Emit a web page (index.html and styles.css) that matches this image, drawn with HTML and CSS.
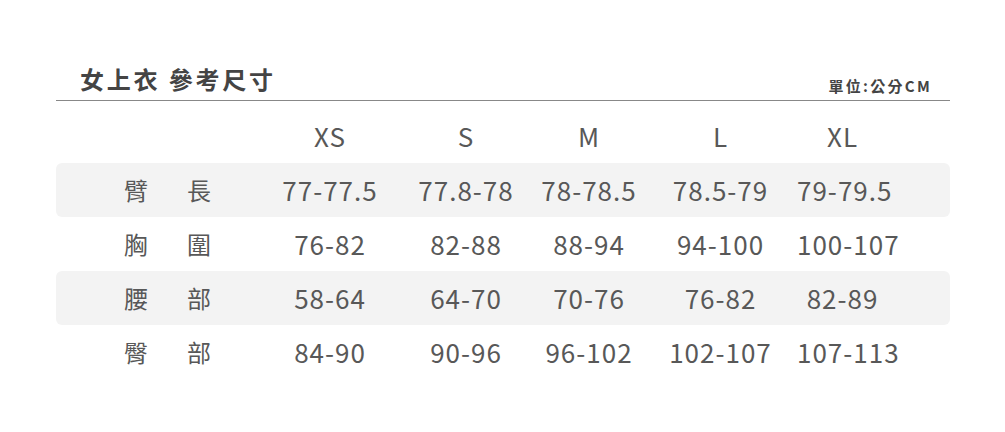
FILE: index.html
```html
<!DOCTYPE html>
<html lang="zh-Hant">
<head>
<meta charset="utf-8">
<link rel="stylesheet" href="styles.css">
</head>
<body>
<div class="page">
  <div class="head">
    <h1 class="title">女上衣 參考尺寸</h1>
    <div class="unit">單位:公分CM</div>
  </div>
  <div class="table">
    <div class="row">
      <div class="label"></div>
      <div class="cell">XS</div><div class="cell">S</div><div class="cell">M</div><div class="cell">L</div><div class="cell">XL</div>
    </div>
    <div class="row band">
      <div class="label"><span>臂</span><span>長</span></div>
      <div class="cell">77-77.5</div><div class="cell">77.8-78</div><div class="cell">78-78.5</div><div class="cell">78.5-79</div><div class="cell">79-79.5</div>
    </div>
    <div class="row">
      <div class="label"><span>胸</span><span>圍</span></div>
      <div class="cell">76-82</div><div class="cell">82-88</div><div class="cell">88-94</div><div class="cell">94-100</div><div class="cell">100-107</div>
    </div>
    <div class="row band">
      <div class="label"><span>腰</span><span>部</span></div>
      <div class="cell">58-64</div><div class="cell">64-70</div><div class="cell">70-76</div><div class="cell">76-82</div><div class="cell">82-89</div>
    </div>
    <div class="row">
      <div class="label"><span>臀</span><span>部</span></div>
      <div class="cell">84-90</div><div class="cell">90-96</div><div class="cell">96-102</div><div class="cell">102-107</div><div class="cell">107-113</div>
    </div>
  </div>
</div>
</body>
</html>
```
FILE: styles.css
```css
html, body {
  margin: 0;
  padding: 0;
  background: #ffffff;
}
body {
  font-family: "Noto Sans CJK TC", "Noto Sans", sans-serif;
  color: #585858;
}
.page {
  width: 894px;
  padding: 67px 0 0 56px;
}
.head {
  display: flex;
  justify-content: space-between;
  align-items: flex-end;
  border-bottom: 1px solid #888888;
  padding-bottom: 9px;
}
.title {
  margin: 0 0 0 24px;
  font-size: 24px;
  line-height: 24px;
  font-weight: 700;
  letter-spacing: 2.8px;
  color: #444444;
}
.unit {
  font-size: 15px;
  line-height: 15px;
  font-weight: 700;
  letter-spacing: 2.3px;
  color: #444444;
  margin: 0 18px -2px 0;
}
.table {
  margin-top: 8px;
  display: flex;
  flex-direction: column;
}
.row {
  display: grid;
  grid-template-columns: 206px 136px 136px 110px 153px 91px 1fr;
  height: 54px;
  align-items: center;
  border-radius: 6px;
}
.band {
  background: #f3f3f3;
}
.label {
  display: flex;
  gap: 39px;
  padding-left: 68px;
  font-size: 24px;
  line-height: 1;
}
.cell {
  text-align: center;
  font-size: 26px;
  line-height: 1;
  letter-spacing: 1px;
  white-space: nowrap;
}
```
